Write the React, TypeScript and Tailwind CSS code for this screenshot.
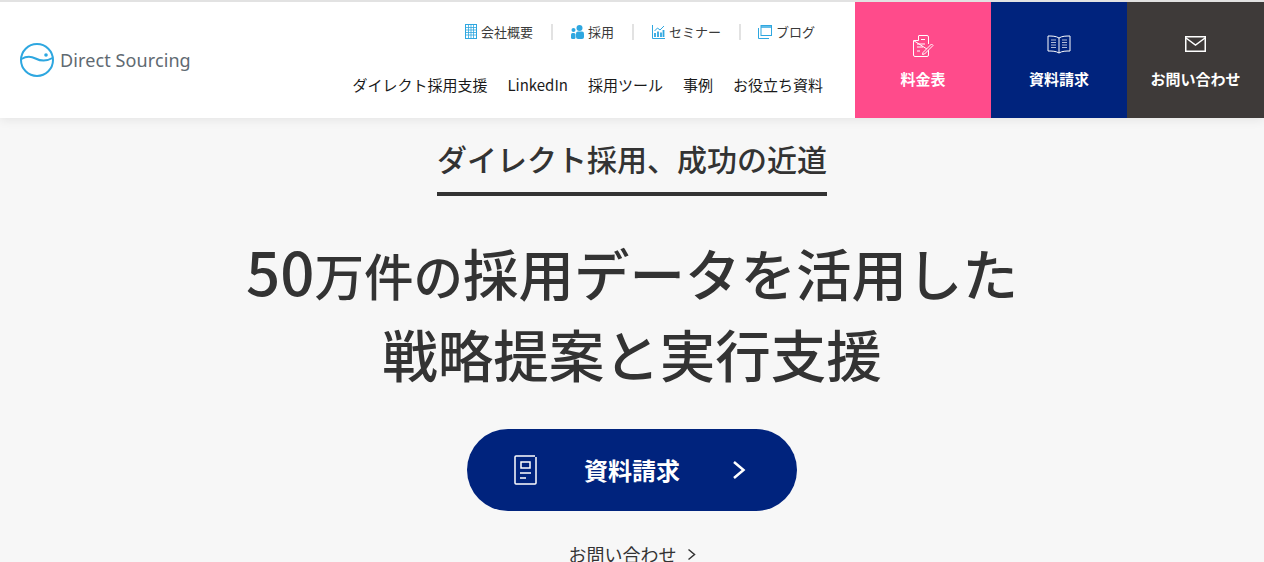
const jp = "font-['Noto_Sans_CJK_JP','Noto_Sans',sans-serif]"

function Logo() {
  return (
    <svg width="36" height="36" viewBox="0 0 36 36" fill="none" stroke="#2ea7e0" strokeWidth="2">
      <circle cx="18" cy="18" r="16" />
      <path d="M2.500 17c5-3 9-3 14-.5s11 3 17-.5" />
      <circle cx="27" cy="13" r="1.800" fill="#2ea7e0" stroke="none" />
    </svg>
  )
}

function TopLink({ icon, label }: { icon: React.ReactNode; label: string }) {
  return (
    <span className="flex items-center gap-[4px] text-[13px] text-[#3a3a3a]">
      {icon}
      {label}
    </span>
  )
}

export default function App() {
  return (
    <div className={`h-[562px] overflow-hidden bg-[#f7f7f7] ${jp}`}>
      <header className="flex h-[118px] border-t-2 border-[#e2e2e2] bg-white shadow-[0_2px_10px_rgba(0,0,0,0.08)]">
        <div className="flex flex-1 justify-between">
          <div className="flex items-center gap-[5px] pl-[19px]">
            <Logo />
            <span className="text-[18px] tracking-[0.1px] text-[#5f6a72] font-['Noto_Sans',sans-serif]">Direct Sourcing</span>
          </div>
          <div className="flex flex-col items-end pr-[32px]">
            <div className="mt-[20px] flex items-center pr-[8px]">
              <TopLink label="会社概要" icon={<svg width="12" height="15" viewBox="0 0 12 15" fill="none" stroke="#2ea7e0"><rect x=".5" y=".5" width="11" height="14" /><path d="M3.500 1v13M6 1v13M8.500 1v13M1 3.500h10M1 6h10M1 8.500h10M1 11h10" strokeWidth=".8" /></svg>} />
              <span className="mx-[18px] h-[16px] w-[2px] bg-[#e2e2e2]" />
              <TopLink label="採用" icon={<svg width="13" height="14" viewBox="0 0 13 14" fill="#2ea7e0"><circle cx="8.500" cy="3" r="3" /><circle cx="2.500" cy="5" r="2" /><rect x="5" y="6.500" width="8" height="7.500" rx="2" /><rect x="0" y="8" width="4.500" height="6" rx="1.500" /></svg>} />
              <span className="mx-[18px] h-[16px] w-[2px] bg-[#e2e2e2]" />
              <TopLink label="セミナー" icon={<svg width="13" height="14" viewBox="0 0 13 14" fill="none" stroke="#2ea7e0"><path d="M.5 0v13.500H13" /><path d="M2.500 6l3-3 2.500 2L12 1" /><path d="M3 12V8M6 12V6.500M9 12V7.500M11.500 12V5" strokeWidth="1.800" /></svg>} />
              <span className="ml-[18px] mr-[17px] h-[16px] w-[2px] bg-[#e2e2e2]" />
              <TopLink label="ブログ" icon={<svg width="14" height="14" viewBox="0 0 14 14" fill="none" stroke="#2ea7e0"><rect x="3" y=".5" width="10.500" height="10" /><path d="M3 2h10.500" strokeWidth="1.500" /><path d="M.5 3v10.500h10.500" /></svg>} />
            </div>
            <nav className="mt-[32px] flex gap-[20px] text-[15px] leading-[22px] text-[#1a1a1a]">
              <span>ダイレクト採用支援</span>
              <span>LinkedIn</span>
              <span>採用ツール</span>
              <span>事例</span>
              <span>お役立ち資料</span>
            </nav>
          </div>
        </div>
        <div className="flex">
          <a className="flex w-[136px] flex-col items-center bg-[#ff4b8b] pt-[33px] text-white">
            <svg width="21" height="22" viewBox="0 0 21 22" fill="none" stroke="white" strokeWidth="1">
              <path d="M5.500 .5H14a1.500 1.500 0 0 1 1.500 1.500v7M15.500 15v5a1.500 1.500 0 0 1-1.500 1.500H2A1.500 1.500 0 0 1 .5 20V5.500z" />
              <path d="M5.500 1v4.500H1M8 4.500h4M4 9h8M4 12h6M4 16h3" />
              <path d="M10 17.500l-.5 2 2-.5 8.500-8.500-1.500-1.500z" fill="#ff4b8b" />
            </svg>
            <span className="mt-[11px] text-[15px] font-bold">料金表</span>
          </a>
          <a className="flex w-[136px] flex-col items-center bg-[#00237d] pt-[33px] text-white">
            <svg width="24" height="20" viewBox="0 0 24 20" fill="none" stroke="white" strokeWidth="1">
              <path d="M12 3C9 1 5 1 1 1v15c4 0 8 0 11 2 3-2 7-2 11-2V1c-4 0-8 0-11 2zM12 3v15" />
              <path d="M4 5h5M4 7.500h5M4 10h5M4 12.500h5M15 5h5M15 7.500h5M15 10h5M15 12.500h5" strokeWidth=".7" />
            </svg>
            <span className="mt-[13px] text-[15px] font-bold">資料請求</span>
          </a>
          <a className="flex w-[137px] flex-col items-center bg-[#3e3a39] pt-[33px] text-white">
            <svg width="21" height="16" viewBox="0 0 21 16" fill="none" stroke="white" strokeWidth="1.500" className="mt-[1px]">
              <rect x=".75" y=".75" width="19.500" height="14.500" />
              <path d="M1 2l9.500 7L20 2" />
            </svg>
            <span className="mt-[16px] text-[15px] font-bold">お問い合わせ</span>
          </a>
        </div>
      </header>

      <main className="flex flex-col items-center text-[#333]">
        <h2 className="mt-[18px] border-b-4 border-[#333] pb-[12px] text-[30px] leading-[44px] font-medium">
          ダイレクト採用、成功の近道
        </h2>
        <h1 className="mt-[34px] text-center text-[55.5px] leading-[79px] font-medium">
          <span className="text-[60px]">50</span>
          <span className="text-[49.5px]">万件の</span>採用データを活用した
          <br />
          戦略提案と実行支援
        </h1>
        <a className="mt-[36px] flex h-[82px] w-[330px] items-center rounded-full bg-[#00237d] pl-[47px] text-white">
          <svg width="23" height="30" viewBox="0 0 23 30" fill="none" stroke="white" strokeWidth="1.500">
            <path d="M21 1H2a1 1 0 0 0-1 1v26a1 1 0 0 0 1 1h19a1 1 0 0 0 1-1V2" />
            <rect x="7" y="7" width="9" height="6" />
            <path d="M6 18h11M6 23h6" />
          </svg>
          <span className="ml-[47px] text-[24px] font-bold">資料請求</span>
          <svg width="14" height="20" viewBox="0 0 14 20" fill="none" stroke="white" strokeWidth="2.500" className="ml-[52px]">
            <path d="M2 2l9.500 8-9.500 8" />
          </svg>
        </a>
        <a className="mt-[30px] flex items-center gap-[10px] text-[18px]">
          お問い合わせ
          <svg width="9" height="13" viewBox="0 0 9 13" fill="none" stroke="#333" strokeWidth="1.500">
            <path d="M1.500 1.500l6 5-6 5" />
          </svg>
        </a>
      </main>
    </div>
  )
}
